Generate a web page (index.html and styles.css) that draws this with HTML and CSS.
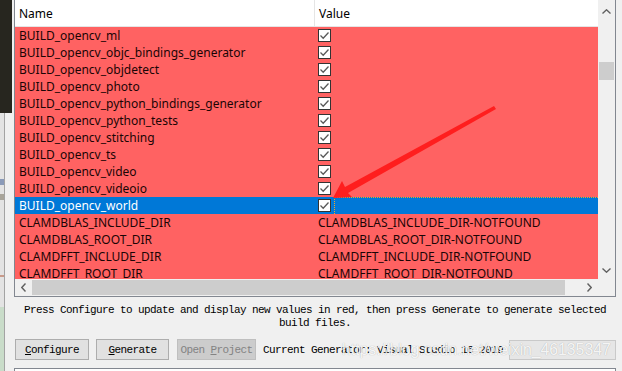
FILE: index.html
```html
<!DOCTYPE html>
<html lang="en">
<head>
  <meta charset="UTF-8" />
  <title>CMake</title>
  <link rel="stylesheet" href="styles.css">
</head>
<body>
<div class="screen">

  <!-- window behind, left edge -->
  <div class="side">
    <div class="side-dark"></div>
    <div class="side-rest">
      <div class="side-strip">
        <span class="frag frag-a"></span>
        <span class="frag frag-b"></span>
        <span class="frag frag-c"></span>
        <span class="frag frag-d"></span>
      </div>
      <div class="side-line"></div>
    </div>
  </div>

  <div class="main">
    <div class="tree">
      <div class="tree-view">
        <div class="tree-body">
          <div class="head">
            <div class="col-name">Name</div>
            <div class="col-value">Value</div>
          </div>
          <div class="row"><div class="cell-name">BUILD_opencv_ml</div><div class="cell-value"><span class="check"><svg viewBox="0 0 11 11"><path d="M1.5 5.5 L4.2 8.2 L9.5 2.5"/></svg></span></div></div>
          <div class="row"><div class="cell-name">BUILD_opencv_objc_bindings_generator</div><div class="cell-value"><span class="check"><svg viewBox="0 0 11 11"><path d="M1.5 5.5 L4.2 8.2 L9.5 2.5"/></svg></span></div></div>
          <div class="row"><div class="cell-name">BUILD_opencv_objdetect</div><div class="cell-value"><span class="check"><svg viewBox="0 0 11 11"><path d="M1.5 5.5 L4.2 8.2 L9.5 2.5"/></svg></span></div></div>
          <div class="row"><div class="cell-name">BUILD_opencv_photo</div><div class="cell-value"><span class="check"><svg viewBox="0 0 11 11"><path d="M1.5 5.5 L4.2 8.2 L9.5 2.5"/></svg></span></div></div>
          <div class="row"><div class="cell-name">BUILD_opencv_python_bindings_generator</div><div class="cell-value"><span class="check"><svg viewBox="0 0 11 11"><path d="M1.5 5.5 L4.2 8.2 L9.5 2.5"/></svg></span></div></div>
          <div class="row"><div class="cell-name">BUILD_opencv_python_tests</div><div class="cell-value"><span class="check"><svg viewBox="0 0 11 11"><path d="M1.5 5.5 L4.2 8.2 L9.5 2.5"/></svg></span></div></div>
          <div class="row"><div class="cell-name">BUILD_opencv_stitching</div><div class="cell-value"><span class="check"><svg viewBox="0 0 11 11"><path d="M1.5 5.5 L4.2 8.2 L9.5 2.5"/></svg></span></div></div>
          <div class="row"><div class="cell-name">BUILD_opencv_ts</div><div class="cell-value"><span class="check"><svg viewBox="0 0 11 11"><path d="M1.5 5.5 L4.2 8.2 L9.5 2.5"/></svg></span></div></div>
          <div class="row"><div class="cell-name">BUILD_opencv_video</div><div class="cell-value"><span class="check"><svg viewBox="0 0 11 11"><path d="M1.5 5.5 L4.2 8.2 L9.5 2.5"/></svg></span></div></div>
          <div class="row"><div class="cell-name">BUILD_opencv_videoio</div><div class="cell-value"><span class="check"><svg viewBox="0 0 11 11"><path d="M1.5 5.5 L4.2 8.2 L9.5 2.5"/></svg></span></div></div>
          <div class="row selected"><div class="cell-name">BUILD_opencv_world</div><div class="cell-value"><span class="check"><svg viewBox="0 0 11 11"><path d="M1.5 5.5 L4.2 8.2 L9.5 2.5"/></svg></span><span class="focus"></span></div></div>
          <div class="row"><div class="cell-name">CLAMDBLAS_INCLUDE_DIR</div><div class="cell-value">CLAMDBLAS_INCLUDE_DIR-NOTFOUND</div></div>
          <div class="row"><div class="cell-name">CLAMDBLAS_ROOT_DIR</div><div class="cell-value">CLAMDBLAS_ROOT_DIR-NOTFOUND</div></div>
          <div class="row"><div class="cell-name">CLAMDFFT_INCLUDE_DIR</div><div class="cell-value">CLAMDFFT_INCLUDE_DIR-NOTFOUND</div></div>
          <div class="row"><div class="cell-name">CLAMDFFT_ROOT_DIR</div><div class="cell-value">CLAMDFFT_ROOT_DIR-NOTFOUND</div></div>
        </div>
        <div class="vscroll">
          <div class="sb-btn sb-up"><svg viewBox="0 0 9 5"><path d="M0.5 4.5 L4.5 0.8 L8.5 4.5"/></svg></div>
          <div class="sb-track-v"><div class="thumb-v"></div></div>
          <div class="sb-btn sb-down"><svg viewBox="0 0 9 5"><path d="M0.5 0.5 L4.5 4.2 L8.5 0.5"/></svg></div>
        </div>
      </div>
      <div class="hscroll">
        <div class="sb-btn sb-left"><svg viewBox="0 0 5 9"><path d="M4.5 0.5 L0.8 4.5 L4.5 8.5"/></svg></div>
        <div class="sb-track-h"><div class="thumb-h"></div></div>
        <div class="sb-btn sb-right"><svg viewBox="0 0 5 9"><path d="M0.5 0.5 L4.2 4.5 L0.5 8.5"/></svg></div>
        <div class="sb-corner"></div>
      </div>
    </div>

    <p class="hint">Press Configure to update and display new values in red, then press Generate to generate selected<br>build files.</p>

    <div class="buttons">
      <button class="btn btn-configure"><u>C</u>onfigure</button>
      <button class="btn btn-generate"><u>G</u>enerate</button>
      <button class="btn btn-open" disabled>Open <u>P</u>roject</button>
      <span class="generator">Current Generator: Visual Studio 16 2019</span>
      <div class="gen-box"></div>
    </div>

    <div class="output"></div>
  </div>

  <!-- annotation arrow drawn over the screenshot -->
  <svg class="arrow" width="622" height="371" viewBox="0 0 622 371">
    <polygon points="333,198 342,181 345,187 494,106 496,109 348,193 352,197" />
  </svg>

  <div class="watermark">https://blog.csdn.net/weixin_46135347</div>
</div>
</body>
</html>
```

FILE: styles.css
```css
* {
  box-sizing: border-box;
}
body {
  margin: 0;
  background: #f0f0f0;
  font-family: "Noto Sans", "Open Sans", sans-serif;
  font-size: 12px;
  color: #000;
}
.screen {
  position: relative;
  width: 622px;
  height: 371px;
  overflow: hidden;
  display: flex;
}

/* left edge of another window */
.side {
  width: 14px;
  flex: none;
  display: flex;
  flex-direction: column;
}
.side-dark {
  height: 113px;
  width: 12px;
  background: #27261f;
}
.side-rest {
  flex: 1;
  display: flex;
}
.side-strip {
  width: 4px;
  background: #e3e3e3;
  display: flex;
  flex-direction: column;
}
.side-line {
  width: 1px;
  background: #a3a3a3;
}
.frag {
  display: block;
  width: 4px;
}
.frag-a {
  height: 6px;
  margin-top: 66px;
  background: #8a9ab8;
}
.frag-b {
  height: 6px;
  margin-top: 9px;
  background: #a8a49a;
}
.frag-c {
  height: 2px;
  margin-top: 75px;
  background: #c89a8a;
}
.frag-d {
  flex: 1;
  margin-top: 30px;
  background: #c9dcc9;
}

.main {
  width: 602px;
  flex: none;
}

/* cache entries tree */
.tree {
  border: 1px solid #828790;
  border-top: none;
  background: #fff;
}
.tree-view {
  display: flex;
  height: 279px;
}
.tree-body {
  flex: 1;
  overflow: hidden;
}
.head {
  display: flex;
  height: 27px;
  border-bottom: 1px solid #e5e5e5;
  line-height: 28px;
}
.col-name {
  width: 300px;
  padding-left: 4px;
  border-right: 1px solid #e5e5e5;
}
.col-value {
  padding-left: 4px;
}
.row {
  display: flex;
  height: 17px;
  line-height: 17px;
  background: #ff6262;
  color: #1a0505;
  white-space: nowrap;
}
.row.selected {
  background: #0078d7;
  color: #fff;
}
.cell-name {
  width: 299px;
  flex: none;
  padding-left: 4px;
}
.cell-value {
  flex: 1;
  padding-left: 4px;
  display: flex;
  align-items: center;
}
.check {
  width: 13px;
  height: 13px;
  border: 1px solid #333;
  background: #fff;
  display: flex;
}
.check svg {
  width: 11px;
  height: 11px;
}
.check path {
  fill: none;
  stroke: #5a5a5a;
  stroke-width: 1.3;
}
.focus {
  flex: 1;
  align-self: stretch;
  margin-left: 3px;
  border-top: 1px dotted #f6a623;
  border-left: 1px dotted #f6a623;
}

/* scroll bars */
.vscroll {
  width: 17px;
  flex: none;
  background: #f0f0f0;
  display: flex;
  flex-direction: column;
}
.sb-btn {
  display: flex;
  align-items: center;
  justify-content: center;
  flex: none;
}
.sb-btn path {
  fill: none;
  stroke: #606060;
  stroke-width: 1.4;
}
.sb-up {
  height: 23px;
}
.sb-down {
  height: 17px;
}
.sb-up svg,
.sb-down svg {
  width: 9px;
  height: 5px;
}
.sb-track-v {
  flex: 1;
}
.thumb-v {
  width: 15px;
  height: 18px;
  margin: 39px 0 0 1px;
  background: #cdcdcd;
}
.hscroll {
  display: flex;
  height: 17px;
  background: #f0f0f0;
}
.sb-left,
.sb-right {
  width: 17px;
}
.sb-left svg,
.sb-right svg {
  width: 5px;
  height: 9px;
}
.sb-track-h {
  flex: 1;
  padding: 1px 0;
}
.thumb-h {
  width: 533px;
  height: 15px;
  background: #cdcdcd;
}
.sb-corner {
  width: 17px;
}

/* bottom part */
.hint {
  margin: 7px 0 0;
  font-family: "Liberation Mono", "DejaVu Sans Mono", monospace;
  font-size: 11px;
  letter-spacing: -0.6px;
  line-height: 13px;
  text-align: center;
  white-space: nowrap;
}
.buttons {
  display: flex;
  align-items: center;
  margin-top: 9px;
  height: 21px;
  font-family: "Liberation Mono", "DejaVu Sans Mono", monospace;
  font-size: 11px;
  letter-spacing: -0.6px;
}
.btn {
  height: 21px;
  padding: 0;
  font: inherit;
  letter-spacing: inherit;
  color: #000;
  background: #e1e1e1;
  border: 1px solid #adadad;
}
.btn-configure {
  width: 74px;
  margin-left: 1px;
}
.btn-generate {
  width: 73px;
  margin-left: 7px;
}
.btn-open {
  width: 79px;
  margin-left: 8px;
  color: #838383;
  background: #cccccc;
  border-color: #bfbfbf;
}
.generator {
  margin-left: 7px;
  white-space: nowrap;
}
.gen-box {
  flex: 1;
  height: 20px;
  margin-left: 6px;
  background: #e6e6e6;
  border: 1px solid #c9c9c9;
}
.output {
  margin-top: 8px;
  height: 20px;
  background: #fff;
  border: 1px solid #828790;
}

/* overlays */
.arrow {
  position: absolute;
  left: 0;
  top: 0;
  pointer-events: none;
}
.arrow polygon {
  fill: #ff1e1e;
}
.watermark {
  position: absolute;
  left: 342px;
  top: 339px;
  font-family: "Liberation Sans", Arial, sans-serif;
  font-size: 15.8px;
  line-height: 22px;
  color: rgba(255, 255, 255, 0.9);
  text-shadow: 0 0 1px rgba(0, 0, 0, 0.3);
  white-space: nowrap;
}
```
